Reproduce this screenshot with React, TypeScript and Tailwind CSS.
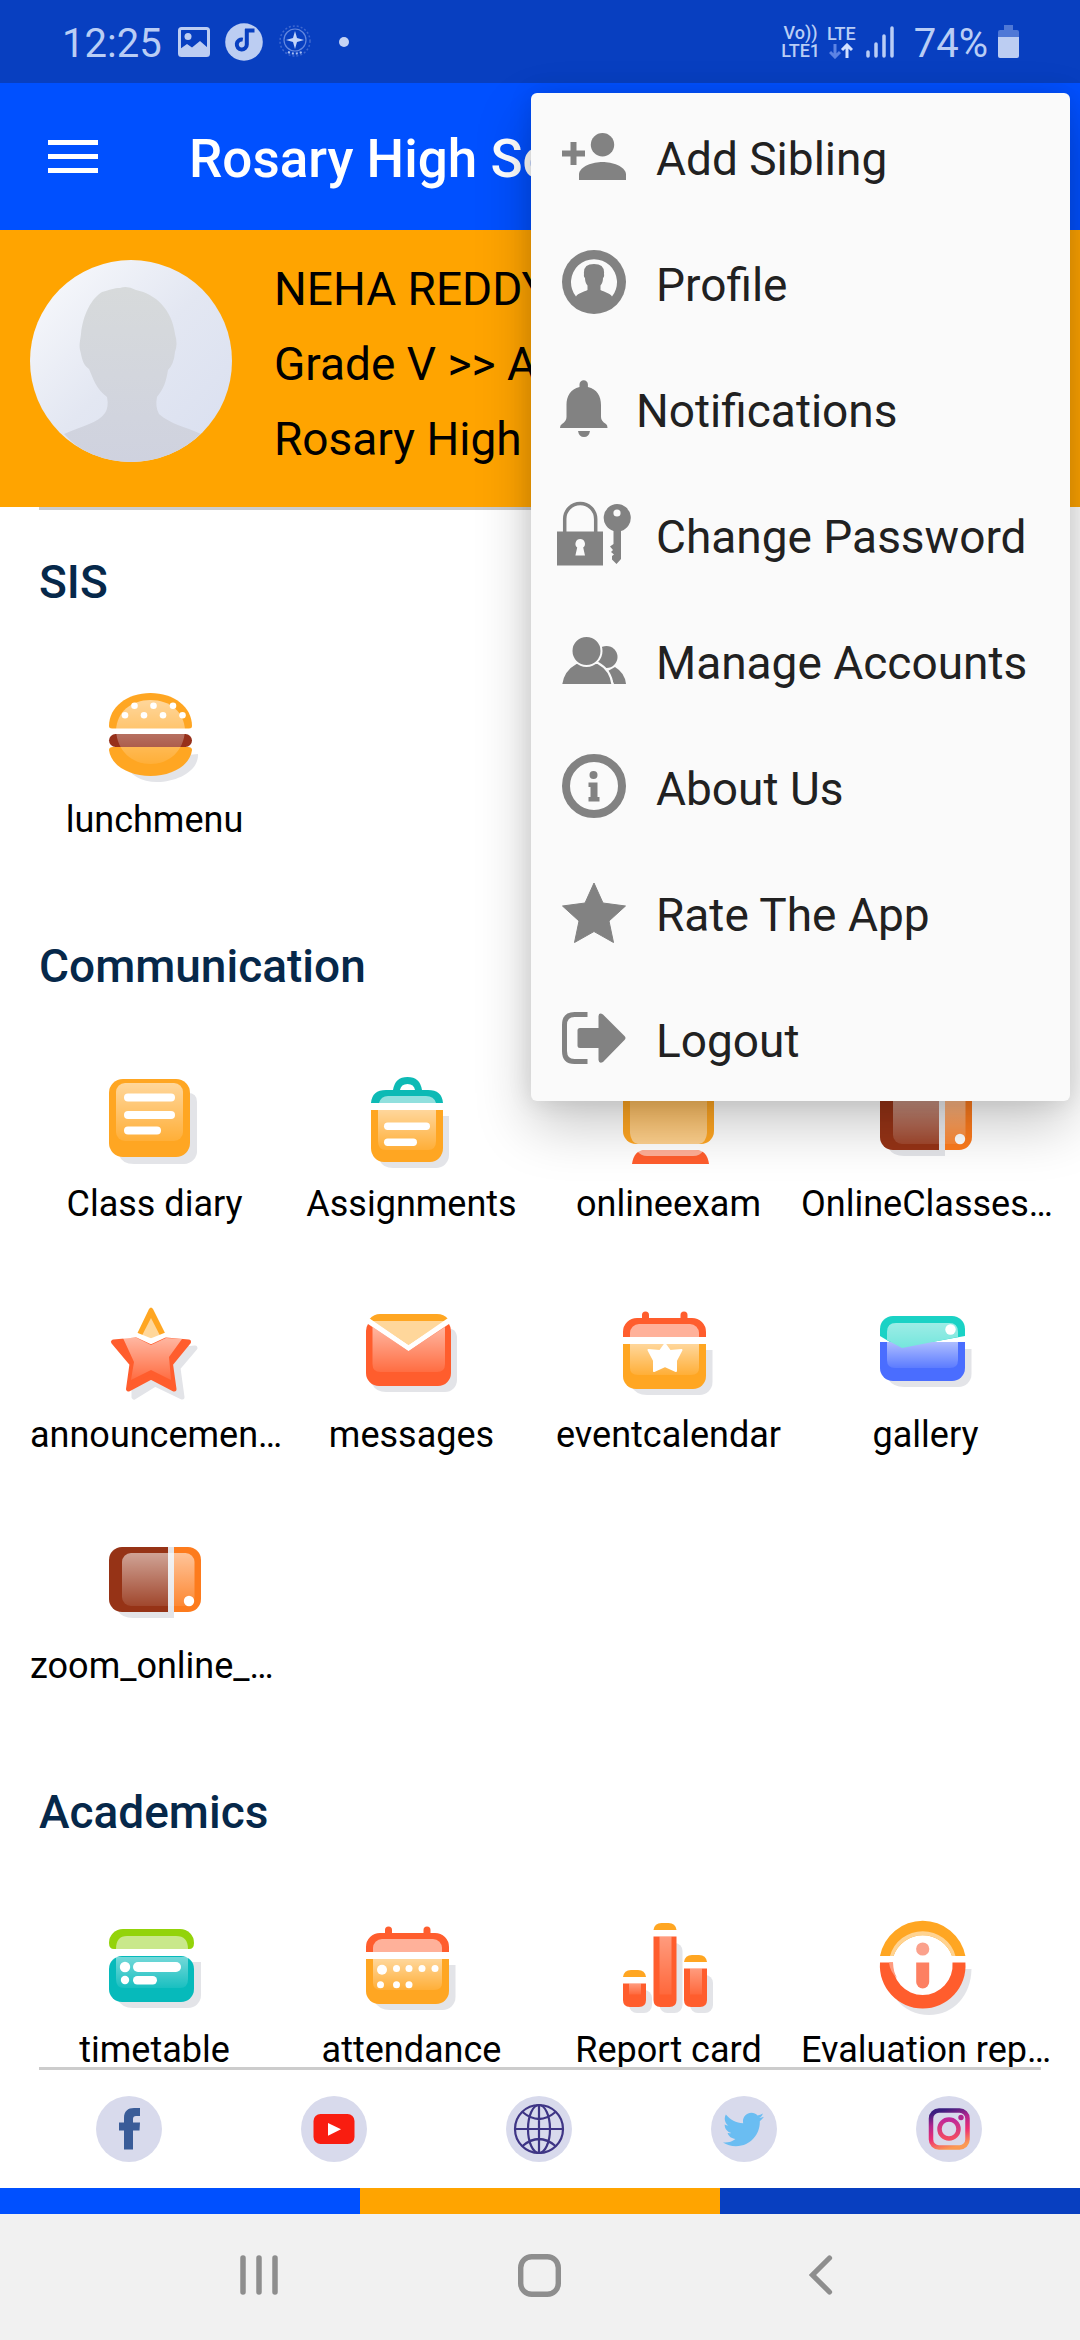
import React from "react";
import { FaTwitter } from "react-icons/fa";

const SHADOW = "#e3e4e8";
const AMBER = "#ffa622";
const CORAL = "#ff5d2d";
const GREY = "#828282";

function Gradients() {
  return (
    <svg className="absolute h-0 w-0" aria-hidden="true">
      <defs>
        <linearGradient id="glass" x1="0" y1="0" x2="0" y2="1">
          <stop offset="0" stopColor="#fff" stopOpacity="0.55" />
          <stop offset="1" stopColor="#fff" stopOpacity="0.1" />
        </linearGradient>
        <linearGradient id="glassUp" x1="0" y1="0" x2="0" y2="1">
          <stop offset="0" stopColor="#fff" stopOpacity="0.2" />
          <stop offset="1" stopColor="#fff" stopOpacity="0.5" />
        </linearGradient>
        <linearGradient id="avatarBg" x1="0" y1="0" x2="1" y2="1">
          <stop offset="0" stopColor="#fafbfd" />
          <stop offset="0.5" stopColor="#e3e7f2" />
          <stop offset="1" stopColor="#d9dff0" />
        </linearGradient>
        <linearGradient id="avatarFg" x1="0" y1="0" x2="0" y2="1">
          <stop offset="0" stopColor="#d7dadb" />
          <stop offset="1" stopColor="#cfd2df" />
        </linearGradient>
        <linearGradient id="insta" x1="0.3" y1="0" x2="0.6" y2="1">
          <stop offset="0" stopColor="#3b1f80" />
          <stop offset="0.3" stopColor="#b0258f" />
          <stop offset="0.65" stopColor="#ee2f72" />
          <stop offset="1" stopColor="#fb9a54" />
        </linearGradient>
        <linearGradient id="instaRing" x1="0" y1="0" x2="0" y2="1">
          <stop offset="0" stopColor="#c0289a" />
          <stop offset="1" stopColor="#f24b62" />
        </linearGradient>
      </defs>
    </svg>
  );
}

function Tile({ children }: { children: React.ReactNode }) {
  return (
    <svg viewBox="0 0 92 92" className="h-[92px] w-[92px] overflow-visible" aria-hidden="true">
      {children}
    </svg>
  );
}

const Burger = () => (
  <Tile>
    <path d="M14 68 L89 61 C90 78 68 89 48 89 C32 89 20 82 14 68Z" fill={SHADOW} />
    <path d="M0 33 C0 14 18 0 41.5 0 S83 14 83 33 q0 2.500-3 2.500 H3 q-3 0-3-2.500Z" fill={AMBER} />
    <path d="M0 57 q0-3 4-3 H79 q4 0 4 3 C81 73 62 83 41.500 83 S2 73 0 57Z" fill={AMBER} />
    <rect x="0" y="41" width="83" height="13" rx="6.500" fill="#96301a" />
    <path d="M7 37 C8 19 22 7 41.500 7 S75 19 76 37 C75 58 60 71 41.500 71 S8 58 7 37Z" fill="url(#glass)" />
    <g fill="#fff">
      <circle cx="25.500" cy="12.700" r="3.300" />
      <circle cx="44.500" cy="12.700" r="3.300" />
      <circle cx="64" cy="12.700" r="3.300" />
      <circle cx="16" cy="22.300" r="3.300" />
      <circle cx="35" cy="22.300" r="3.300" />
      <circle cx="54" cy="22.300" r="3.300" />
      <circle cx="73.500" cy="22.300" r="3.300" />
    </g>
  </Tile>
);

const Diary = () => (
  <Tile>
    <path d="M75 16 h4 q9 0 9 9 V73 a13 13 0 0 1-13 14 H25 q-12 0-15-9Z" fill={SHADOW} />
    <rect x="0" y="2" width="81" height="78" rx="14" fill={AMBER} />
    <rect x="7" y="6" width="67" height="58" rx="9" fill="url(#glass)" />
    <g fill="#fff">
      <rect x="15" y="16.500" width="51" height="8" rx="4" />
      <rect x="15" y="34" width="51" height="8" rx="4" />
      <rect x="15" y="49.500" width="37" height="8" rx="4" />
    </g>
  </Tile>
);

const Assignment = () => (
  <Tile>
    <path d="M70 39 h13 V78 a13 13 0 0 1-13 13 H27 q-10 0-13-7Z" fill={SHADOW} />
    <path d="M5 26 q1-13 15-13 H27 q2-13 14.500-13 T56 13 H62 q14 0 15 13Z" fill="#0dbab5" />
    <path d="M34 13 q1-6 7.500-6 t7.500 6Z" fill="#fff" />
    <path d="M13 26 q2-7 9-7 H60 q8 0 10 7Z" fill="#fff" fillOpacity="0.55" />
    <path d="M5 33 H77 V71 a13 14 0 0 1-13 14 H18 a13 14 0 0 1-13-14Z" fill={AMBER} />
    <path d="M12 33 H70 V64 q0 9-8 9 H20 q-8 0-8-9Z" fill="url(#glass)" />
    <rect x="18" y="45.500" width="46" height="7.500" rx="3.700" fill="#fff" />
    <rect x="18" y="61.500" width="33" height="7.500" rx="3.700" fill="#fff" />
  </Tile>
);

const Exam = () => (
  <Tile>
    <rect x="0" y="0" width="91" height="67" rx="13" fill={AMBER} />
    <path d="M7 7 H84 V56 q-1 10-8 11 H15 q-7-1-8-11Z" fill="url(#glassUp)" />
    <path d="M9 87 Q11 73 22 73 H73 Q84 73 86 87Z" fill={CORAL} />
    <path d="M14 74 L22 73 H73 L80 74 Q77 79 70 79 H24 Q18 79 14 74Z" fill="#fff" fillOpacity="0.5" />
  </Tile>
);

const Classes = () => (
  <Tile>
    <path d="M9 70 H59 V8 H65 V79 H24 Q13 79 9 72Z" fill={SHADOW} />
    <path d="M59 8 V73 H13 A13 13 0 0 1 0 60 V21 A13 13 0 0 1 13 8Z" fill="#963316" />
    <path d="M65 8 H79 A13 13 0 0 1 92 21 V60 A13 13 0 0 1 79 73 H65Z" fill="#fd7b1d" />
    <rect x="13" y="14" width="72.500" height="53" rx="9" fill="url(#glass)" />
    <circle cx="80" cy="62" r="5.200" fill="#fff" />
  </Tile>
);

const Announce = () => (
  <Tile>
    <path
      d="M75 41 L86 40 L69 60 L73 89 L46 76 L25 89 L25 80Z"
      fill={SHADOW}
      stroke={SHADOW}
      strokeWidth="5"
      strokeLinejoin="round"
    />
    <path d="M40 1 q2-3 4 0 L56 25 Q56 27 53 27.500 L42 31 L31 27.500 Q28 27 28.500 25Z" fill={AMBER} />
    <path d="M42 10 L51 27.500 L42 31 L33 27.500Z" fill="#fff" fillOpacity="0.55" />
    <path
      d="M4.500 34 L27 32 L42 39 L57 32 L79.500 34 L61.500 56 L65 81 L42 69 L19.500 81 L23 56Z"
      fill={CORAL}
      stroke={CORAL}
      strokeWidth="5"
      strokeLinejoin="round"
    />
    <path d="M14 30 L28 30 L42 37 L57 30 L73 31 L60 49 L62 72 L42 62 L22 72 L25 54Z" fill="url(#glass)" />
    <path d="M27 26 L42 32 L57 26" fill="none" stroke="#fff" strokeWidth="3" />
  </Tile>
);

const Message = () => (
  <Tile>
    <path d="M80 20 Q91 20 91 30 V72 a12 12 0 0 1-12 12 H20 Q10 84 6 76Z" fill={SHADOW} />
    <path d="M2 16 L42.500 43 L83 16 Q85 19 85 23 V65 a13 13 0 0 1-13 13 H13 A13 13 0 0 1 0 65 V23 Q0 19 2 16Z" fill={CORAL} />
    <path d="M3.500 11 Q8 6 14 6 H71 Q78 6 82 11 L42.500 37Z" fill={AMBER} />
    <path d="M6.500 13 H79 L42.500 37Z" fill="#fff" fillOpacity="0.55" />
    <path d="M6.500 19 L42.500 43 L79 19 V56 q0 8-8 8 H14.500 q-8 0-8-8Z" fill="url(#glass)" />
    <path d="M2 12 L42.500 40 L83 12" fill="none" stroke="#fff" strokeWidth="4.500" />
  </Tile>
);

function CalendarBase({ children }: { children: React.ReactNode }) {
  return (
    <Tile>
      <path d="M76 42 H89.500 V74 a13 13 0 0 1-13 13 H24 Q13 87 8 78Z" fill={SHADOW} />
      <path d="M0 29 V24 A14 14 0 0 1 14 10 H19 V7 a3.500 3.500 0 0 1 7 0 V10 H57.500 V7 a3.500 3.500 0 0 1 7 0 V10 H69 A14 14 0 0 1 83 24 V29Z" fill={CORAL} />
      <path d="M7 29 V25 A9 9 0 0 1 16 16 H67 A9 9 0 0 1 76 25 V29Z" fill="#fff" fillOpacity="0.52" />
      <path d="M0 36 H83 V68 a13 13 0 0 1-13 13 H13 A13 13 0 0 1 0 68Z" fill={AMBER} />
      <path d="M7 36 H76 V60 q0 7-8 7 H15 q-8 0-8-7Z" fill="url(#glass)" />
      {children}
    </Tile>
  );
}

const EventCalendar = () => (
  <CalendarBase>
    <path
      d="M42 36 L47 43 L58.500 42 L53 52.500 L53 63 L42 58 L31 63 L31 52.500 L25.500 42 L37 43Z"
      fill="#fff"
      stroke="#fff"
      strokeWidth="2"
      strokeLinejoin="round"
    />
  </CalendarBase>
);

const Attendance = () => (
  <CalendarBase>
    <g fill="#fff">
      <circle cx="16" cy="46.700" r="5" />
      <circle cx="30.500" cy="45.500" r="3.500" />
      <circle cx="43" cy="45.500" r="3.500" />
      <circle cx="56" cy="45.500" r="3.500" />
      <circle cx="69" cy="45.500" r="3.500" />
      <circle cx="14.500" cy="61.700" r="3.500" />
      <circle cx="30.500" cy="61.700" r="3.500" />
      <circle cx="43" cy="61.700" r="3.500" />
    </g>
  </CalendarBase>
);

const Gallery = () => (
  <Tile>
    <path d="M80 41 H91.500 V66 a13 13 0 0 1-13 13 H24 Q13 79 8 71Z" fill={SHADOW} />
    <path d="M0 34 H85 V60 a13 13 0 0 1-13 13 H13 A13 13 0 0 1 0 60Z" fill="#4a6dff" />
    <path d="M7 34 H78 V52 q0 8-8 8 H15 q-8 0-8-8Z" fill="url(#glass)" />
    <path d="M0 28 V21 A13 13 0 0 1 13 8 H72 A13 13 0 0 1 85 21 V28 L52 34 H10Z" fill="#1ad2c5" />
    <path d="M7 32 V24 q0-9 9-9 H69 q9 0 9 9 V29 L22 40Z" fill="#6ce4da" />
    <path d="M7 32 V24 q0-9 9-9 H69 q9 0 9 9 V29 L22 40Z" fill="url(#glass)" fillOpacity="0.6" />
    <circle cx="70.500" cy="21.500" r="5.200" fill="#fff" />
  </Tile>
);

const Timetable = () => (
  <Tile>
    <path d="M80 39 H92 V72 a13 13 0 0 1-13 13 H24 Q13 85 8 76Z" fill={SHADOW} />
    <path d="M0 20 A14 14 0 0 1 14 6 H71 A14 14 0 0 1 85 20 Q85 26 80 26 H5 Q0 26 0 20Z" fill="#93d30a" />
    <path d="M7 26 Q7 13 18 13 H67 Q79 13 79 26Z" fill="#c9e88b" />
    <rect x="0" y="33" width="85" height="46" rx="13" fill="#06babb" />
    <path d="M7 34 H79 V56 q0 9-8 9 H15 q-8 0-8-9Z" fill="url(#glass)" fillOpacity="0.8" />
    <g fill="#fff">
      <circle cx="16" cy="44" r="5.200" />
      <rect x="24" y="39" width="48" height="10" rx="5" />
      <circle cx="16" cy="57" r="4.200" />
      <rect x="24" y="53" width="24" height="8.500" rx="4.200" />
    </g>
  </Tile>
);

const bars = [
  { x: 0, top: 47 },
  { x: 30.5, top: 0 },
  { x: 61, top: 32 },
];

const Report = () => (
  <Tile>
    {bars.map((b) => (
      <rect key={b.x} x={b.x + 6} y={b.top + 20} width="23" height={70 - b.top} rx="8" fill={SHADOW} />
    ))}
    {bars.map((b) => (
      <g key={b.x}>
        <path d={`M${b.x} ${b.top + 7} q1-7 8-7 h7 q7 0 8 7Z`} fill={AMBER} />
        <rect x={b.x} y={b.top + 7} width="23" height="7" fill="#fff" />
        <path d={`M${b.x} ${b.top + 13.5} h23 V77 q0 7-7 7 h-9 q-7 0-7-7Z`} fill={CORAL} />
        <rect x={b.x + 6} y={b.top + 13.5} width="12" height={58 - b.top} fill="url(#glass)" fillOpacity="0.7" />
      </g>
    ))}
  </Tile>
);

const Evaluation = () => (
  <Tile>
    <path d="M85 46 H91.500 C91 72 74 92 49 92 C36 92 24 86 17 77Z" fill={SHADOW} />
    <circle cx="42.700" cy="42.700" r="30" fill="#fff" />
    <path d="M0 33 A43.500 43.500 0 0 1 85.400 33 H72 A31 31 0 0 0 13.500 33Z" fill={AMBER} />
    <path d="M10 33 A34 34 0 0 1 75.500 33 H72 A31 31 0 0 0 13.500 33Z" fill="#ffd391" />
    <path d="M0 39.500 H13 A30 30 0 0 0 42.700 72 A30 30 0 0 0 72.500 39.500 H85.400 A42.700 42.700 0 0 1 42.700 85.500 A42.700 42.700 0 0 1 0 39.500Z" fill={CORAL} />
    <path d="M9 39.500 H13 Q13 48 17 55 Q10 49 9 39.500Z" fill="#ff9a7d" />
    <circle cx="42.700" cy="26" r="6.600" fill="#fba18c" />
    <path d="M36.200 39.500 h13 V59 a6.500 6.500 0 0 1-13 0Z" fill="#fd8062" />
  </Tile>
);

type Item = { label: string; icon: React.ReactNode };
const sections: { title: string; items: Item[] }[] = [
  { title: "SIS", items: [{ label: "lunchmenu", icon: <Burger /> }] },
  {
    title: "Communication",
    items: [
      { label: "Class diary", icon: <Diary /> },
      { label: "Assignments", icon: <Assignment /> },
      { label: "onlineexam", icon: <Exam /> },
      { label: "OnlineClasses…", icon: <Classes /> },
      { label: "announcemen…", icon: <Announce /> },
      { label: "messages", icon: <Message /> },
      { label: "eventcalendar", icon: <EventCalendar /> },
      { label: "gallery", icon: <Gallery /> },
      { label: "zoom_online_…", icon: <Classes /> },
    ],
  },
  {
    title: "Academics",
    items: [
      { label: "timetable", icon: <Timetable /> },
      { label: "attendance", icon: <Attendance /> },
      { label: "Report card", icon: <Report /> },
      { label: "Evaluation rep…", icon: <Evaluation /> },
    ],
  },
];

function MenuSvg({ w = 64, h, children }: { w?: number; h: number; children: React.ReactNode }) {
  return (
    <svg width={w} height={h} viewBox={`0 0 ${w} ${h}`} className="shrink-0 overflow-visible" fill={GREY} aria-hidden="true">
      {children}
    </svg>
  );
}

const menu: Item[] = [
  {
    label: "Add Sibling",
    icon: (
      <MenuSvg h={47}>
        <circle cx="40.500" cy="11.700" r="11.700" />
        <path d="M17 47 V41 C18 33 31 29 40.500 29 S63 33 64 41 V47Z" />
        <path d="M8.500 9 h6 v8.500 H23 v6 H14.500 V32 h-6 V23.500 H0 v-6 H8.500Z" />
      </MenuSvg>
    ),
  },
  {
    label: "Profile",
    icon: (
      <MenuSvg h={64}>
        <circle cx="32" cy="32" r="32" />
        <path
          d="M14 46.500 A23 23 0 1 1 50 46.500 C48 43 42 42 38.500 40 V35.500 Q41 33 41 28 Q42.500 27 42 24 Q43 14 32 14 Q21 14 22 24 Q21.500 27 23 28 Q23 33 25.500 35.500 V40 C22 42 16 43 14 46.500Z"
          fill="#fafafa"
        />
      </MenuSvg>
    ),
  },
  {
    label: "Notifications",
    icon: (
      <MenuSvg w={44} h={57}>
        <path d="M17.500 7 V4.500 a4.200 4.200 0 0 1 8.400 0 V7 C35 9 39 16 39 25 V37 Q39 41 44 44 Q45.500 45 45.500 48 H-2 Q-2 45 0 44 Q4.500 41 4.500 37 V25 C4.500 16 8.500 9 17.500 7Z" />
        <path d="M16 51 h12 q-1 6-6 6 t-6-6Z" />
      </MenuSvg>
    ),
  },
  {
    label: "Change Password",
    icon: (
      <MenuSvg h={64}>
        <path d="M2.700 30 V17 a15.500 15.500 0 0 1 31 0 V30" fill="none" stroke={GREY} strokeWidth="3.500" />
        <rect x="-5" y="29.500" width="46" height="34" />
        <path d="M18.200 37 a4.800 4.800 0 0 1 3 8.500 l1.800 8 h-9.600 l1.800-8 a4.800 4.800 0 0 1 3-8.500Z" fill="#fafafa" />
        <path d="M55 2 a13.800 13.800 0 0 1 4 27 V57 l-4.500 5 L50 57.500 V54 l2-1.500 -3-2.500 2-2 -3-3.500 3.500-2.500 V29 A13.800 13.800 0 0 1 55 2Z" />
        <circle cx="55" cy="11" r="3.600" fill="#fafafa" />
      </MenuSvg>
    ),
  },
  {
    label: "Manage Accounts",
    icon: (
      <MenuSvg h={47}>
        <circle cx="44.500" cy="20" r="11" />
        <path d="M46 34 L53 30 Q63 36 64 47 H52Z" />
        <g stroke="#fafafa" strokeWidth="2">
          <path d="M-1 48 Q1 33 14 26 H36 Q49 33 50.500 48Z" />
          <circle cx="24.500" cy="14" r="15" />
        </g>
      </MenuSvg>
    ),
  },
  {
    label: "About Us",
    icon: (
      <MenuSvg h={64}>
        <circle cx="32" cy="32" r="28" fill="none" stroke={GREY} strokeWidth="8" />
        <circle cx="31.500" cy="21" r="4" />
        <path d="M26.500 28.500 h9 v14.500 h2 v4.500 h-11 V43 h2 V33 h-2Z" />
      </MenuSvg>
    ),
  },
  {
    label: "Rate The App",
    icon: (
      <MenuSvg h={61}>
        <path
          d="M32 1 L41 21 L63.500 24 L47 39 L51.500 60.500 L32 49.500 L12.500 60.500 L17 39 L0.500 24 L23 21Z"
          stroke={GREY}
          strokeLinejoin="round"
        />
      </MenuSvg>
    ),
  },
  {
    label: "Logout",
    icon: (
      <MenuSvg h={52}>
        <path d="M25.500 2.500 H12.500 Q2.500 2.500 2.500 13 V39 Q2.500 49.500 12.500 49.500 H25.500" fill="none" stroke={GREY} strokeWidth="5" />
        <path d="M18 16 H36.500 V4 Q37 0 41 2.500 L62.500 24 Q64.500 26 62.500 28 L41 50 Q37 52 36.500 48 V36 H18 Q15.500 36 15.500 33.500 V18.500 Q15.500 16 18 16Z" />
      </MenuSvg>
    ),
  },
];

function SocialSvg({ children }: { children: React.ReactNode }) {
  return (
    <svg viewBox="0 0 66 66" className="h-[66px] w-[66px]" aria-hidden="true">
      {children}
    </svg>
  );
}

const socials: Item[] = [
  {
    label: "Facebook",
    icon: (
      <SocialSvg>
        <path d="M28 53.500 V34.500 H23 V26.500 H28 V22 C28 15 32 12 38 12 H44 V20 H40 Q37 20 37 23 V26.500 H44 L43.500 34.500 H37 V53.500Z" fill="#3a5c98" />
      </SocialSvg>
    ),
  },
  {
    label: "YouTube",
    icon: (
      <SocialSvg>
        <rect x="12.500" y="18" width="41" height="30" rx="7" fill="#f91d10" />
        <path d="M27 27 L40 33.300 L27 39.700Z" fill="#fff" />
      </SocialSvg>
    ),
  },
  {
    label: "Website",
    icon: (
      <SocialSvg>
        <g fill="none" stroke="#3e3585" strokeWidth="2.200">
          <circle cx="33" cy="33" r="24" />
          <ellipse cx="33" cy="33" rx="11" ry="24" />
          <path d="M33 9 V57 M9 33 H57 M16.500 16 Q33 30 49.500 16 M16.500 50 Q33 36 49.500 50" />
        </g>
      </SocialSvg>
    ),
  },
  { label: "Twitter", icon: <FaTwitter size={41} color="#6abdf2" aria-hidden="true" /> },
  {
    label: "Instagram",
    icon: (
      <SocialSvg>
        <rect x="15" y="14.500" width="36.500" height="37" rx="8" fill="none" stroke="url(#insta)" strokeWidth="4.500" />
        <circle cx="33" cy="33" r="9.500" fill="none" stroke="url(#instaRing)" strokeWidth="4.500" />
        <circle cx="45" cy="21.500" r="2.700" fill="#b0258f" />
      </SocialSvg>
    ),
  },
];

function StatusBar() {
  return (
    <div className="flex h-[83px] shrink-0 items-center bg-[#083fc0] pr-[61px] pl-[62px] text-[#b9cdf5]">
      <span className="pt-[5px] text-[40px] leading-[46px]">12:25</span>
      <svg width="32" height="30" viewBox="0 0 32 30" className="ml-[16px]" aria-hidden="true">
        <rect x="1.500" y="1.500" width="29" height="27" rx="2" fill="none" stroke="#bccdf2" strokeWidth="3" />
        <circle cx="10" cy="9.500" r="3.500" fill="#bccdf2" />
        <path d="M2 22 L9 17 L14 20.500 L22 14 L30 21 V28 H2Z" fill="#bccdf2" />
      </svg>
      <svg width="38" height="38" viewBox="0 0 38 38" className="ml-[15px]" aria-hidden="true">
        <circle cx="19" cy="19" r="18.800" fill="#bccdf2" />
        <path d="M20 7.500 H29.500 M21.800 6 V21.500 a5 5 0 1 1-4-4.900" fill="none" stroke="#083fc0" strokeWidth="4" />
      </svg>
      <svg width="34" height="36" viewBox="0 0 34 36" className="ml-[15px]" aria-hidden="true">
        <circle cx="17" cy="17" r="15" fill="none" stroke="#3f68cf" strokeWidth="1.500" strokeDasharray="2 2" />
        <circle cx="17" cy="16" r="11" fill="none" stroke="#6387de" strokeWidth="1.200" />
        <path d="M17 7 L19 14 L26 16 L19 18 L17 25 L15 18 L8 16 L15 14Z" fill="#c3d4fa" />
        <path d="M10 28 Q17 31 24 28" fill="none" stroke="#a8bff3" strokeWidth="2" strokeDasharray="2 2" />
      </svg>
      <span className="ml-[27px] h-[10px] w-[10px] rounded-full bg-[#c5d3f4]" />
      <div className="ml-auto flex items-center">
        <div className="flex flex-col items-center text-[18px] leading-[18px] font-medium">
          <span>Vo))</span>
          <span>LTE1</span>
        </div>
        <div className="ml-[7px] flex flex-col items-center text-[18px] leading-[18px] font-medium">
          <span>LTE</span>
          <svg width="24" height="16" viewBox="0 0 24 16" fill="none" aria-hidden="true">
            <path d="M6 1 V14 M1 9 L6 14 L11 9" stroke="#5c83e4" strokeWidth="3" />
            <path d="M18 15 V2 M13 7 L18 2 L23 7" stroke="#d2e0ff" strokeWidth="3" />
          </svg>
        </div>
        <svg width="28" height="32" viewBox="0 0 28 32" className="ml-[10px]" aria-hidden="true">
          <path d="M2 26 V30 M10 18 V30 M18 10 V30 M26 2 V30" stroke="#b9cdf5" strokeWidth="3.500" strokeLinecap="round" />
        </svg>
        <span className="ml-[20px] pt-[5px] text-[40px] leading-[46px]">74%</span>
        <svg width="21" height="34" viewBox="0 0 21 34" className="ml-[10px]" aria-hidden="true">
          <path d="M6 0 H15 V5 H19 Q21 5 21 7 V12 H0 V7 Q0 5 2 5 H6Z" fill="#4f78d6" />
          <path d="M0 12 H21 V31 Q21 33 19 33 H2 Q0 33 0 31Z" fill="#bccdf2" />
        </svg>
      </div>
    </div>
  );
}

export default function App() {
  return (
    <div className="relative flex h-screen flex-col overflow-hidden bg-white font-[Roboto,sans-serif] text-black">
      <Gradients />
      <StatusBar />

      <header className="flex h-[147px] shrink-0 items-center bg-[#0050ff] pl-[48px] text-white">
        <button type="button" aria-label="Open navigation" className="flex w-[50px] flex-col gap-[9px]">
          <span className="h-[5px] bg-white" />
          <span className="h-[5px] bg-white" />
          <span className="h-[5px] bg-white" />
        </button>
        <h1 className="ml-[91px] pt-[4px] text-[53px] leading-[64px] font-medium whitespace-nowrap">Rosary High School</h1>
      </header>

      <section className="flex h-[277px] shrink-0 items-start bg-[#ffa400] px-[30px] pt-[22px]">
        <svg viewBox="0 0 202 202" className="mt-[8px] h-[202px] w-[202px] shrink-0 rounded-full" role="img" aria-label="Student photo">
          <rect width="202" height="202" fill="url(#avatarBg)" />
          <path
            d="M34 174 C52 166 68 163 75 153 Q79 147 77 137 C66 129 63 118 59 109 C52 104 52 97 50 90 C49 84 50 82 51 74 C53 54 62 38 72 32 C80 30 84 28 90 28 Q97 25 106 30 C126 34 142 50 145 74 Q148 84 145 92 Q144 104 138 110 C136 122 134 128 127 137 Q125 147 129 154 C140 164 156 167 171 174 C150 194 128 202 101 202 S52 194 34 174Z"
            fill="url(#avatarFg)"
          />
        </svg>
        <div className="ml-[42px] text-[46px] leading-[75px] whitespace-nowrap">
          <p>NEHA REDDY</p>
          <p>Grade V &gt;&gt; A</p>
          <p>Rosary High School</p>
        </div>
      </section>

      <hr className="mx-[39px] h-[3px] shrink-0 border-0 bg-[#cccccc]" />

      <main className="min-h-0 flex-1 overflow-y-auto [scrollbar-width:none]">
        {sections.map((s) => (
          <section key={s.title}>
            <h2 className="px-[39px] pt-[45px] pb-[54px] text-[46px] leading-[54px] font-medium text-[#06284a]">{s.title}</h2>
            <div className="grid grid-cols-4 px-[26px]">
              {s.items.map((it) => (
                <button key={it.label} type="button" className="flex flex-col items-center px-[4px] pt-[30px] pb-[53px]">
                  {it.icon}
                  <span
                    className={
                      it.label.endsWith("…")
                        ? "mt-[14px] w-full text-left text-[36px] leading-[42px] whitespace-nowrap"
                        : "mt-[14px] text-[36px] leading-[42px] whitespace-nowrap"
                    }
                  >
                    {it.label}
                  </span>
                </button>
              ))}
            </div>
          </section>
        ))}
      </main>

      <hr className="mx-[39px] h-[3px] shrink-0 border-0 bg-[#cccccc]" />

      <footer className="shrink-0">
        <div className="grid grid-cols-5 justify-items-center py-[26px] pr-[29px] pl-[26px]">
          {socials.map((s) => (
            <a
              key={s.label}
              href={`#${s.label.toLowerCase()}`}
              aria-label={s.label}
              className="flex h-[66px] w-[66px] items-center justify-center rounded-full bg-[#d8daec]"
            >
              {s.icon}
            </a>
          ))}
        </div>
        <div className="grid h-[26px] grid-cols-3">
          <span className="bg-[#0050ff]" />
          <span className="bg-[#ffa400]" />
          <span className="bg-[#083fc0]" />
        </div>
        <nav className="grid h-[126px] grid-cols-3 bg-[#f1f1f1] px-[118px] pb-[4px]">
          <button type="button" aria-label="Recent apps" className="flex items-center justify-center">
            <svg width="38" height="40" viewBox="0 0 38 40" stroke="#8e8e8e" strokeWidth="5.500" strokeLinecap="round" aria-hidden="true">
              <path d="M3 3 V37 M19 3 V37 M35 3 V37" />
            </svg>
          </button>
          <button type="button" aria-label="Home" className="flex items-center justify-center">
            <svg width="43" height="43" viewBox="0 0 43 43" aria-hidden="true">
              <rect x="2.700" y="2.700" width="37.600" height="37.600" rx="11" fill="none" stroke="#8e8e8e" strokeWidth="5.400" />
            </svg>
          </button>
          <button type="button" aria-label="Back" className="flex items-center justify-center">
            <svg width="24" height="40" viewBox="0 0 24 40" fill="none" stroke="#8e8e8e" strokeWidth="5.200" strokeLinecap="round" aria-hidden="true">
              <path d="M20.500 3 L3.500 20 L20.500 37" />
            </svg>
          </button>
        </nav>
      </footer>

      <div
        role="menu"
        className="absolute top-[93px] right-[10px] flex w-[539px] flex-col rounded-[6px] bg-[#fafafa] shadow-[0_24px_56px_rgba(0,0,0,0.22),0_0_24px_rgba(0,0,0,0.1)]"
      >
        {menu.map((m) => (
          <button key={m.label} type="button" role="menuitem" className="flex h-[126px] items-center gap-[30px] pl-[31px] text-left">
            {m.icon}
            <span className="pt-[5px] text-[46px] leading-[54px] whitespace-nowrap text-[#212121]">{m.label}</span>
          </button>
        ))}
      </div>
    </div>
  );
}
